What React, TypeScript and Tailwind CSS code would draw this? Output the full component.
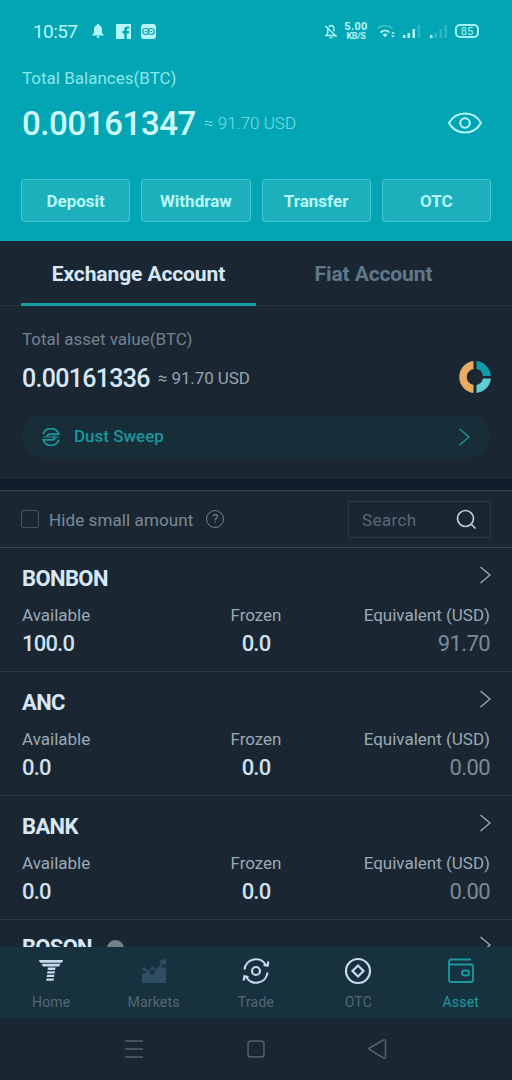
import React from 'react';

const actions = ['Deposit', 'Withdraw', 'Transfer', 'OTC'];

const assets = [
  { symbol: 'BONBON', available: '100.0', frozen: '0.0', equivalent: '91.70' },
  { symbol: 'ANC', available: '0.0', frozen: '0.0', equivalent: '0.00' },
  { symbol: 'BANK', available: '0.0', frozen: '0.0', equivalent: '0.00' },
];

function Chevron({ className }: { className: string }) {
  return (
    <svg className={className} width="12" height="18" viewBox="0 0 12 18" fill="none" stroke="currentColor" strokeWidth="1.4">
      <path d="M1.5 1l9.5 8-9.5 8" />
    </svg>
  );
}

function StatusBar() {
  return (
    <div className="flex h-[62px] items-center pl-[33px] pr-[32px] text-[#b5f7f7]">
      <span className="w-[59px] text-[19px] leading-none tracking-[-0.6px]">10:57</span>
      <svg width="12" height="14" viewBox="0 0 12 14" fill="currentColor">
        <path d="M6 0a1.3 1.3 0 0 1 1.3 1.3C9.2 1.9 10 3.5 10 5.3V9l1.7 1.8v.7H.3v-.7L2 9V5.3c0-1.8.8-3.4 2.7-4A1.3 1.3 0 0 1 6 0zM4.4 12.3h3.2a1.6 1.6 0 0 1-3.2 0z" />
      </svg>
      <svg className="ml-[12px]" width="15" height="15" viewBox="0 0 15 15" fill="currentColor">
        <path d="M0 0h15v15h-4.2V9.4h2l.3-2.3h-2.3V5.8c0-.8.3-1.2 1.3-1.2h1.1V2.4h-1.9c-2 0-3 1.2-3 3v1.7H6.500v2.300h1.800V15H0z" />
      </svg>
      <svg className="ml-[10px]" width="15" height="15" viewBox="0 0 15 15">
        <rect width="15" height="15" rx="3" fill="currentColor" />
        <g fill="none" stroke="#0b9fab" strokeWidth="1.2">
          <circle cx="4.8" cy="7.5" r="3" />
          <circle cx="10.2" cy="7.5" r="3" />
          <path d="M3.8 7.5h2M9.2 7.5h2" />
        </g>
      </svg>
      <div className="ml-auto flex items-center">
        <svg width="14" height="15" viewBox="0 0 14 15" fill="none" stroke="currentColor" strokeWidth="1.4">
          <path d="M5 3.3C5.300 2 6 1.500 7 1.500c2.200 0 3 2 3 4v1.800M3.800 5v4L2 11.500h9M1.200 1.800l11.500 11M5.500 13.600h3" />
        </svg>
        <div className="ml-[6px] flex w-[24px] flex-col items-center font-bold">
          <span className="text-[11px] leading-[11px] tracking-[0.3px]">5.00</span>
          <span className="text-[9px] leading-[9px] tracking-[-0.3px]">KB/S</span>
        </div>
        <svg className="ml-[8px]" width="21" height="15" viewBox="0 0 21 15" fill="none" stroke="currentColor" strokeWidth="1.7">
          <path d="M1.500 4.500c4.500-4 10.500-4 15 0" opacity=".35" />
          <path d="M4.500 8.500c2.700-2.400 6.500-2.400 9 0" />
          <path d="M6.500 10.500c1.500-1.200 3.500-1.200 5 0L9 13.200z" fill="currentColor" stroke="none" />
          <path d="M15 9.800l2-2 2 2zM15 11.500l2 2 2-2z" fill="currentColor" stroke="none" />
        </svg>
        <svg className="ml-[5px]" width="20" height="15" viewBox="0 0 20 15" fill="currentColor">
          <path d="M1 11h2.500v3H1zM5.500 9H8v5H5.500zM10.500 5H13v9h-2.500z" />
          <path d="M15.500 1H18v13h-2.500z" opacity=".25" />
        </svg>
        <svg className="ml-[7px]" width="20" height="15" viewBox="0 0 20 15" fill="currentColor">
          <path d="M1 11h2.500v3H1z" />
          <path d="M5.500 9H8v5H5.500zM10.500 5H13v9h-2.500zM15.500 1H18v13h-2.500z" opacity=".25" />
        </svg>
        <div className="ml-[6px] mr-px flex h-[14px] w-[24px] items-center justify-center rounded-[5px] border-2 border-[#a5f2f4] text-[11px] leading-none">85</div>
      </div>
    </div>
  );
}

function Header() {
  return (
    <header className="h-[241px] bg-[#01a5b3]">
      <StatusBar />
      <div className="px-[22px]">
        <div className="flex h-[34px] items-center text-[17px] text-[#8ce5ea]">Total Balances(BTC)</div>
        <div className="flex h-[54px] items-center pt-[1px]">
          <span className="text-[33px] font-medium tracking-[-0.4px] text-[#cffcff]">0.00161347</span>
          <span className="ml-[8px] text-[17px] font-light text-[#7edfe5]">≈ 91.70 USD</span>
          <svg className="mb-[2px] ml-auto mr-[7px]" width="36" height="24" viewBox="0 0 36 24" fill="none" stroke="#b5f7f7" strokeWidth="2">
            <path d="M2 12C9-.7 27-.7 34 12 27 24.700 9 24.700 2 12z" />
            <circle cx="18" cy="12" r="4.800" />
          </svg>
        </div>
      </div>
      <div className="mt-[29px] grid grid-cols-4 gap-[11px] px-[21px]">
        {actions.map((label) => (
          <button key={label} className="h-[43px] rounded-[3px] border border-[#44c6cf] bg-[#1bb0bb] pt-[2px] text-[17px] font-bold text-[#b9f8fa]">
            {label}
          </button>
        ))}
      </div>
    </header>
  );
}

function AccountTabs() {
  return (
    <div className="flex h-[65px] border-b border-[#243743] px-[21px] text-[21px] font-bold tracking-[-0.1px]">
      <div className="flex h-[65px] w-[235px] items-center justify-center border-b-[3px] border-[#199da5] pt-[6px] text-[#d6e8f7]">Exchange Account</div>
      <div className="flex h-[65px] w-[235px] items-center justify-center pb-[3px] pt-[6px] text-[#607889]">Fiat Account</div>
    </div>
  );
}

function AccountSummary() {
  return (
    <section className="h-[173px] px-[22px] pt-[17px]">
      <div className="flex h-[34px] items-center text-[17px] text-[#71828e]">Total asset value(BTC)</div>
      <div className="flex h-[42px] items-center pt-[1px]">
        <span className="text-[25px] font-medium tracking-[-0.7px] text-[#d6e8f7]">0.00161336</span>
        <span className="ml-[8px] text-[17px] tracking-[-0.1px] text-[#94a3ad]">≈ 91.70 USD</span>
        <svg className="mb-[3px] ml-auto mr-[-1px]" width="32" height="32" viewBox="-16 -16 32 32">
          <path d="M-1.500-15.900A16 16 0 0 0-1.500 15.900V7.900A8 8 0 0 1-1.500-7.900z" fill="#e9ab62" />
          <path d="M1.500-15.900A16 16 0 0 1 15.900-1H7.900A8 8 0 0 0 1.500-7.900z" fill="#129ca9" />
          <path d="M15.900 1.500A16 16 0 0 1 1.500 15.900V7.900A8 8 0 0 0 7.900 1.500z" fill="#5fcbd3" />
        </svg>
      </div>
      <div className="mt-[16px] flex h-[43px] items-center rounded-full bg-[#172e38] pl-[20px] pr-[20px] text-[#19969c]">
        <svg width="18" height="18" viewBox="0 0 18 18" fill="none" stroke="currentColor" strokeWidth="1.800">
          <path d="M1.200 6.200A8.200 8.200 0 0 1 16.800 6.200H7L4.500 8.200" />
          <path d="M16.800 11.800A8.200 8.200 0 0 1 1.200 11.800H11L13.500 9.800" />
          <path d="M1 9h9.500L13 7.600M17 9H8" strokeWidth="1.200" />
        </svg>
        <span className="ml-[14px] text-[17px] font-medium">Dust Sweep</span>
        <Chevron className="ml-auto" />
      </div>
    </section>
  );
}

function FilterBar() {
  return (
    <div className="flex h-[58px] items-center border-y border-[#35474f] px-[21px]">
      <div className="h-[18px] w-[18px] rounded-[2px] border border-[#46545d]" />
      <span className="ml-[10px] pt-[3px] text-[17px] tracking-[0.1px] text-[#7c8b96]">Hide small amount</span>
      <div className="ml-[13px] flex h-[18px] w-[18px] items-center justify-center rounded-full border border-[#71808a] text-[13px] text-[#71808a]">?</div>
      <div className="ml-auto flex h-[37px] w-[143px] items-center border border-[#2b3b46] px-[13px]">
        <span className="pt-[3px] text-[17px] tracking-[0.4px] text-[#586975]">Search</span>
        <svg className="ml-auto" width="21" height="21" viewBox="0 0 21 21" fill="none" stroke="#bdcbd5" strokeWidth="1.700">
          <circle cx="9.500" cy="9.500" r="8" />
          <path d="M15 15l4.500 4.500" />
        </svg>
      </div>
    </div>
  );
}

function AssetRow({ asset }: { asset: (typeof assets)[number] }) {
  return (
    <div className="h-[124px] border-b border-[#2a3b46] px-[22px] pt-[14px]">
      <div className="flex h-[32px] items-center justify-between">
        <span className="text-[22px] font-bold tracking-[-0.6px] text-[#d6e8f7]">{asset.symbol}</span>
        <Chevron className="mb-[6px] mr-[-1px] text-[#9aa9b5]" />
      </div>
      <div className="mt-[7px] grid h-[30px] grid-cols-3 items-center text-[17px] text-[#9ba9b4]">
        <span>Available</span>
        <span className="text-center">Frozen</span>
        <span className="text-right">Equivalent (USD)</span>
      </div>
      <div className="grid h-[25px] grid-cols-3 items-center text-[22px] font-medium leading-none tracking-[-0.8px] text-[#cfe0ee]">
        <span>{asset.available}</span>
        <span className="text-center">{asset.frozen}</span>
        <span className="text-right font-normal tracking-[-0.6px] text-[#7b8a96]">{asset.equivalent}</span>
      </div>
    </div>
  );
}

function BottomNav() {
  return (
    <nav className="grid h-[71px] shrink-0 grid-cols-5 bg-[#18313f] text-center text-[14px] tracking-[0.2px] text-[#526876]">
      <div className="flex flex-col items-center">
        <svg className="mb-[7px] mt-[10px] h-[28px] w-[28px] text-[#c6dcec]" viewBox="0 0 28 28" fill="currentColor">
          <path d="M2 3h24l-1 2.700H3zM4.500 6.700h19l-1.500 2.700H6zM11 10.600h7.500l-.5 2.300h-7.500zM10.500 14.200H18l-.5 2.300H10zM10 17.800h7.500l-.5 2.300H9.500zM9.500 21.400H17l-.5 2.300H9z" />
        </svg>
        <span>Home</span>
      </div>
      <div className="flex flex-col items-center">
        <svg className="mb-[7px] mt-[10px] h-[28px] w-[28px] text-[#2e4d61]" viewBox="0 0 28 28" fill="currentColor">
          <path d="M2 17l5.500-2.500 5 3.500L20 10.500h6V26H2z" />
          <path d="M1.500 11.500l3-1 4 3.500 3.500-5 4 3.500 5-6-2-2.500 7.500-2.500-.5 7.500-2-2-8 8-4-3.500-3 5z" />
        </svg>
        <span>Markets</span>
      </div>
      <div className="flex flex-col items-center">
        <svg className="mb-[7px] mt-[10px] h-[28px] w-[28px]" viewBox="0 0 28 28" fill="none" stroke="#c6dcec" strokeWidth="2.200">
          <path d="M2.500 12.500A11.500 11.500 0 0 1 24 8.200M25.500 15.500A11.500 11.500 0 0 1 4 19.800M26.300 4.500L25.600 8.800 21.500 8M1.700 23.500L2.400 19.200 6.500 20" />
          <circle cx="14" cy="14" r="4" />
        </svg>
        <span>Trade</span>
      </div>
      <div className="flex flex-col items-center">
        <svg className="mb-[7px] mt-[10px] h-[28px] w-[28px]" viewBox="0 0 28 28" fill="none" stroke="#c6dcec" strokeWidth="2.200">
          <circle cx="14" cy="14" r="12" />
          <path d="M14 8.500l5.500 5.500-5.500 5.500L8.500 14z" />
        </svg>
        <span>OTC</span>
      </div>
      <div className="flex flex-col items-center text-[#1a9ba3]">
        <svg className="mb-[7px] mt-[10px] h-[28px] w-[28px]" viewBox="0 0 28 28" fill="none" stroke="currentColor" strokeWidth="1.800">
          <path d="M24 2.500H4C1.300 2.500 1.300 7.500 4 7.500h20q2 0 2 2V23q0 2-2 2H4q-2 0-2-2V5" />
          <rect x="15" y="13.500" width="7" height="5" rx="2.500" />
        </svg>
        <span>Asset</span>
      </div>
    </nav>
  );
}

export default function App() {
  return (
    <div className="flex h-[1080px] w-[512px] flex-col overflow-hidden bg-[#1a2733] font-['Roboto',sans-serif]">
      <Header />
      <AccountTabs />
      <AccountSummary />
      <div className="h-[11px] bg-[#0e1b28]" />
      <FilterBar />
      {assets.map((asset) => (
        <AssetRow key={asset.symbol} asset={asset} />
      ))}
      {/* last row is half hidden behind the bottom nav */}
      <div className="flex h-[27px] shrink-0 items-start overflow-hidden px-[22px]">
        <span className="mt-[12px] text-[22px] font-bold leading-[32px] tracking-[-0.7px] text-[#d6e8f7]">BOSON</span>
        <div className="ml-[15px] mt-[20px] h-[17px] w-[17px] shrink-0 rounded-full bg-[#74818b]" />
        <Chevron className="ml-auto mr-[-1px] mt-[16px] shrink-0 text-[#9aa9b5]" />
      </div>
      <BottomNav />
      <div className="flex flex-1 items-center justify-center">
        <svg className="h-[26px] w-full" viewBox="0 0 512 26" fill="none" stroke="#53616c" strokeWidth="1.500">
          <path d="M125 5h18M125 13h18M125 21h18" />
          <rect x="248" y="5" width="16" height="16" rx="3" />
          <path d="M369.500 12l14-8q2-.8 2 1v16q0 1.800-2 1l-14-8.500q-1-.8 0-1.500z" />
        </svg>
      </div>
    </div>
  );
}
